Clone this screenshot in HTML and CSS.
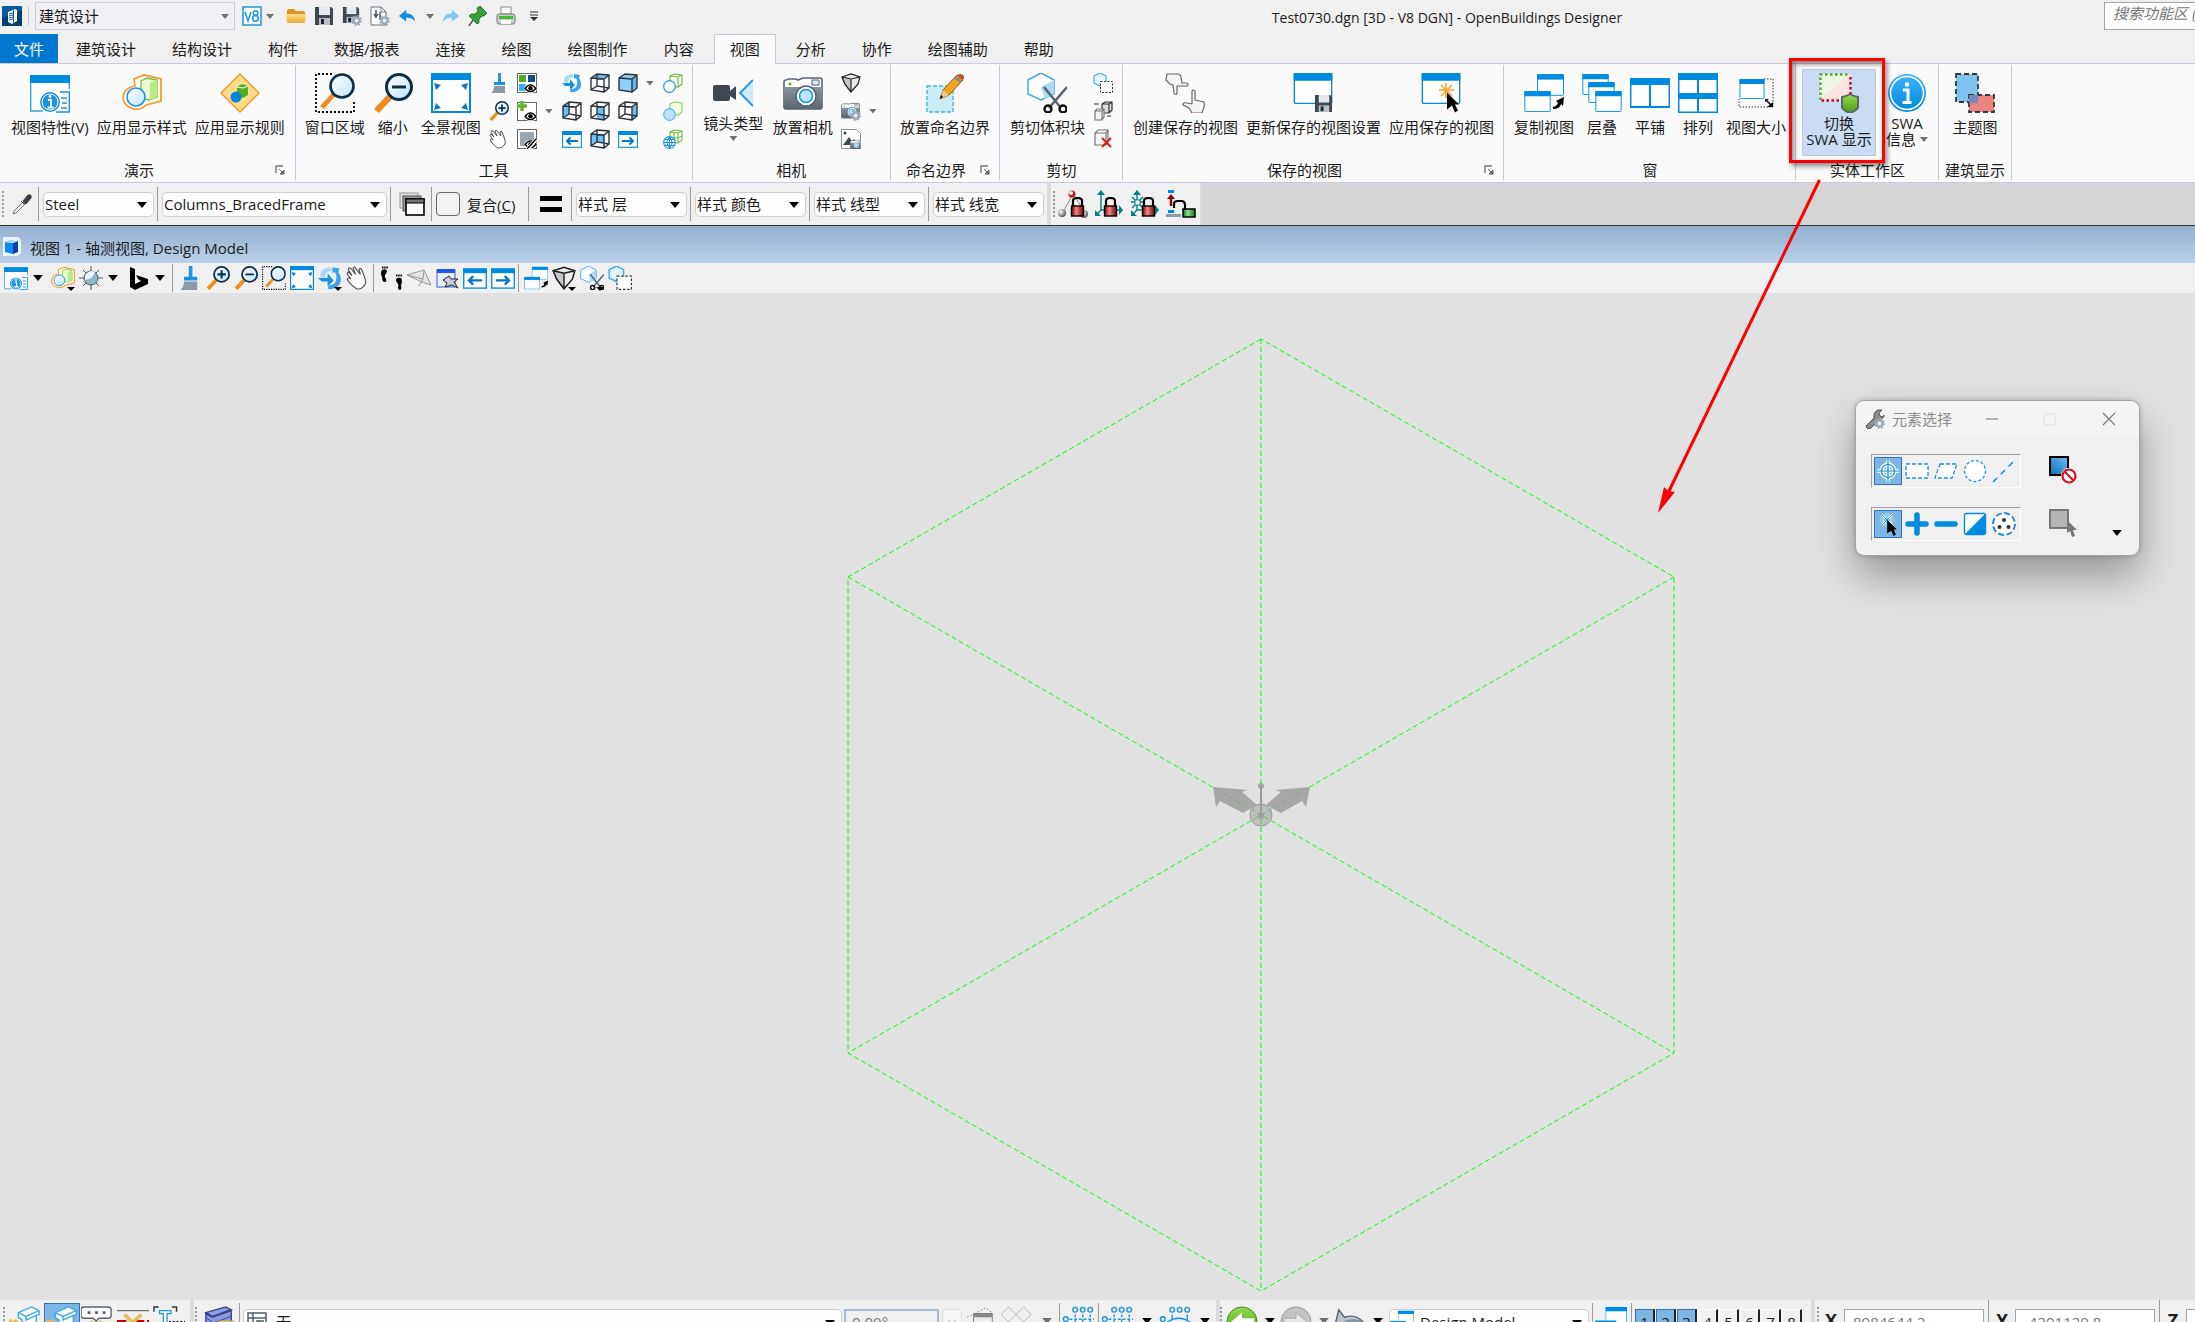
FILE: index.html
```html
<!DOCTYPE html>
<html lang="zh-CN">
<head>
<meta charset="utf-8">
<title>Test0730.dgn [3D - V8 DGN] - OpenBuildings Designer</title>
<link rel="stylesheet" href="styles.css">
</head>
<body>
<svg class="sprite" aria-hidden="true">
  <defs>
    <linearGradient id="gGreen" x1="0" y1="0" x2="0" y2="1"><stop offset="0" stop-color="#8fdc4f"/><stop offset="1" stop-color="#4e9a16"/></linearGradient>
    <linearGradient id="gGray" x1="0" y1="0" x2="0" y2="1"><stop offset="0" stop-color="#8a939c"/><stop offset="1" stop-color="#5c6670"/></linearGradient>
    <linearGradient id="gInfo" x1="0" y1="0" x2="0" y2="1"><stop offset="0" stop-color="#3db4ff"/><stop offset="1" stop-color="#0086dd"/></linearGradient>
    <linearGradient id="gLens" x1="0" y1="0" x2="1" y2="1"><stop offset="0" stop-color="#ffffff"/><stop offset="1" stop-color="#bfe4ff"/></linearGradient>
    <linearGradient id="gFolder" x1="0" y1="0" x2="0" y2="1"><stop offset="0" stop-color="#fde08a"/><stop offset="1" stop-color="#eda93b"/></linearGradient>
    <linearGradient id="gRed" x1="0" y1="0" x2="1" y2="0"><stop offset="0" stop-color="#7a0000"/><stop offset=".4" stop-color="#e88"/><stop offset="1" stop-color="#7a0000"/></linearGradient>
    <linearGradient id="gLockG" x1="0" y1="0" x2="1" y2="0"><stop offset="0" stop-color="#0a7a1c"/><stop offset=".4" stop-color="#8fe08f"/><stop offset="1" stop-color="#0a7a1c"/></linearGradient>
    <linearGradient id="gSq" x1="0" y1="1" x2="1" y2="0"><stop offset="0" stop-color="#0a6db5"/><stop offset="1" stop-color="#6ec0f5"/></linearGradient>
    <radialGradient id="gBall" cx=".35" cy=".35" r=".7"><stop offset="0" stop-color="#fff"/><stop offset="1" stop-color="#555"/></radialGradient>
  </defs>

  <symbol id="logo" viewBox="0 0 20 20"><rect width="20" height="20" rx="1" fill="#0b5a9c"/><path d="M0 12L20 4V20H0z" fill="#08416f"/><path d="M6 6l7-3 2 1v11l-5 3-4-2z" fill="#fff"/><path d="M7 8l4-1M7 10l4-1M7 12l4-1M7 14l4-1M11.500 4v13" stroke="#0b5a9c" fill="none"/></symbol>
  <symbol id="v8" viewBox="0 0 20 20"><rect x="1" y="1" width="18" height="18" fill="#fff" stroke="#1e93e0" stroke-width="1.500"/><path d="M3 6l3 9 3-9" fill="none" stroke="#1e93e0" stroke-width="1.500"/><circle cx="13.500" cy="7" r="2.300" fill="none" stroke="#1e93e0" stroke-width="1.500"/><circle cx="13.500" cy="12.300" r="2.900" fill="none" stroke="#1e93e0" stroke-width="1.500"/></symbol>
  <symbol id="folder" viewBox="0 0 20 20"><path d="M1 5q0-2 2-2h5l2 2h7q2 0 2 2v8q0 2-2 2H3q-2 0-2-2z" fill="#d9952c"/><path d="M0 8h20l-1 8q0 1-2 1H3q-2 0-2-1z" fill="url(#gFolder)"/></symbol>
  <symbol id="save" viewBox="0 0 20 20"><path d="M1 1h16l2 2v16H1z" fill="#3f4750"/><rect x="5" y="1" width="11" height="8" fill="#e4e9ee"/><rect x="5" y="12" width="11" height="7" fill="#b9bfc6"/><rect x="7" y="13" width="3" height="5" fill="#20262d"/></symbol>
  <symbol id="gear" viewBox="0 0 20 20"><circle cx="10" cy="10" r="7" fill="#e8edf2"/><circle cx="10" cy="10" r="5.500" fill="none" stroke="#9aa7b5" stroke-width="4"/><circle cx="10" cy="10" r="8.500" fill="none" stroke="#9aa7b5" stroke-width="3" stroke-dasharray="3.300 3.300"/></symbol>
  <symbol id="savegear" viewBox="0 0 20 20"><use href="#save" width="18" height="18"/><use href="#gear" x="9" y="9" width="11" height="11"/></symbol>
  <symbol id="docgear" viewBox="0 0 20 20"><path d="M1 1h10l5 5v13H1z" fill="#fff" stroke="#69727c"/><path d="M11 1v5h5" fill="none" stroke="#69727c"/><path d="M6 4v8M4 8l2 3 2-3M10 6v8" stroke="#4b5763" stroke-width="1.500" fill="none"/><use href="#gear" x="9" y="9" width="11" height="11"/></symbol>
  <symbol id="undo" viewBox="0 0 20 20"><path d="M1 10l8-7v4c6 0 9 3 10 9-3-3-5-4-10-4v4z" fill="#1a8fe3"/></symbol>
  <symbol id="redo" viewBox="0 0 20 20"><path d="M19 10l-8-7v4c-6 0-9 3-10 9 3-3 5-4 10-4v4z" fill="#86c5f0"/></symbol>
  <symbol id="pin" viewBox="0 0 20 20"><path d="M9 2l3-2 7 7-3 3-2 0-3 3 0 4-2 1-8-8 2-2 4 0 3-3z" fill="#35a03a" stroke="#1e7024" stroke-width=".8"/><path d="M5 14l-4 6" stroke="#555" stroke-width="1.500"/></symbol>
  <symbol id="print" viewBox="0 0 20 20"><path d="M5 8V1h10v7z" fill="#fff" stroke="#888"/><rect x="1" y="8" width="18" height="10" rx="2" fill="#c9cdd2" stroke="#777"/><rect x="3" y="10" width="14" height="3" fill="#3fbf2f"/><rect x="5" y="14" width="10" height="4" fill="#fff"/></symbol>
  <symbol id="qmenu" viewBox="0 0 12 12"><path d="M2 2h8M2 5h8" stroke="#333"/><path d="M2 7h8l-4 4z" fill="#333"/></symbol>

  <symbol id="win" viewBox="0 0 40 32"><rect x=".7" y=".7" width="38.600" height="30.600" rx="1" fill="#fff" stroke="#008be1" stroke-width="1.400"/><rect width="40" height="8" fill="#008be1"/></symbol>
  <symbol id="winprop" viewBox="0 0 40 40"><path d="M.7 3h38.600v35H.7z" fill="#fff" stroke="#3aa0e0" stroke-width="1.400"/><rect y="2" width="40" height="8" fill="#008be1"/><path d="M22 16h18v24H12z" fill="#fff"/><path d="M30 19h9.300v20H26M31 25h6M32 30h5M31 35h6" fill="none" stroke="#1e93e0" stroke-width="1.500"/><circle cx="20" cy="29" r="10" fill="#1e93e0"/><circle cx="20" cy="29" r="8" fill="none" stroke="#fff"/><path d="M18 27h3v7M17.500 34.500h6" stroke="#fff" stroke-width="2" fill="none"/><circle cx="20" cy="23.500" r="1.400" fill="#fff"/></symbol>
  <symbol id="dstyle" viewBox="0 0 40 40"><path d="M12 6l10-4 17 4v22l-15 4q-5 5-12 4Q1 33 1 24q1-9 12-11z" fill="#fffaf0" stroke="#f59a23" stroke-width="1.700"/><path d="M19 8l6-3 10 2v17l-8 3-8-2z" fill="#e9fbd5" stroke="#6fbf3b" stroke-width="1.300"/><path d="M28 10l7-3v17l-7 3z" fill="#b8eb84"/><circle cx="14" cy="24" r="9" fill="url(#gLens)" stroke="#1e93e0" stroke-width="1.600"/></symbol>
  <symbol id="drule" viewBox="0 0 40 40"><path d="M20 1l19 19-19 19L1 20z" fill="#ffdc8c" stroke="#f59a23" stroke-width="1.500"/><path d="M17 14l5-3 6 2v9l-5 3-6-2z" fill="#4fae22"/><path d="M17 14l6 1 5-2" stroke="#fff" fill="none"/><circle cx="16" cy="24" r="5.500" fill="#0086dd"/></symbol>
  <symbol id="mag" viewBox="0 0 40 40"><path d="M1 36l5 4 13-14-5-4z" fill="#f08c1e"/><circle cx="26" cy="14" r="12.500" fill="url(#gLens)" stroke="#0b2f48" stroke-width="3"/></symbol>
  <symbol id="zoomarea" viewBox="0 0 40 40"><path d="M17 1H1v38h38V28" fill="none" stroke="#000" stroke-width="1.800" stroke-dasharray="2 2"/><path d="M5 33l4 3 12-14-3-3z" fill="#f08c1e"/><circle cx="27" cy="13" r="11.500" fill="url(#gLens)" stroke="#0b2f48" stroke-width="2.600"/></symbol>
  <symbol id="zoomout" viewBox="0 0 40 40"><use href="#mag"/><path d="M19 14h14" stroke="#0b2f48" stroke-width="3"/></symbol>
  <symbol id="zoomin" viewBox="0 0 40 40"><use href="#mag"/><path d="M19 14h14M26 7v14" stroke="#0b2f48" stroke-width="3.500"/></symbol>
  <symbol id="fit" viewBox="0 0 40 40"><rect x="1" y="1" width="38" height="38" fill="#fff" stroke="#008be1" stroke-width="2"/><rect width="40" height="7" fill="#008be1"/><path d="M3 10l7 2-5 5zM37 10l-7 2 5 5zM3 37l7-2-5-5zM37 37l-7-2 5-5z" fill="#1274c4"/></symbol>
  <symbol id="brush" viewBox="0 0 20 20"><path d="M9 0h3v9h4v3H5V9h4z" fill="#1e93e0"/><path d="M5 13h11v7H2q3-2 3-7z" fill="#8c98a3"/></symbol>
  <symbol id="hand" viewBox="0 0 20 20"><path d="M2 8q-2-2 0-3l3 3-3-5q0-2 2-1l4 5-2-5q1-2 2 0l4 5-1-4q1-2 2 0l2 5q2 5 1 7-3 5-7 4-2-1-6-5l-2-3q1-2 3 0z" fill="#fff" stroke="#555" stroke-width="1"/></symbol>
  <symbol id="eye" viewBox="0 0 14 10"><ellipse cx="7" cy="5" rx="7" ry="5" fill="#fff"/><path d="M1 5q6-8 12 0q-6 7-12 0z" fill="#fff" stroke="#000" stroke-width="1.600"/><circle cx="7" cy="4.600" r="2.500"/></symbol>
  <symbol id="lvl" viewBox="0 0 20 20"><rect x=".5" y=".5" width="19" height="19" fill="#fff" stroke="#666"/><rect x="2" y="2" width="7" height="7" fill="#52ab24"/><rect x="11" y="2" width="7" height="7" fill="#0b4f80"/><rect x="2" y="11" width="7" height="7" fill="#35b0f5"/><use href="#eye" x="7" y="11" width="13" height="9"/></symbol>
  <symbol id="lvladd" viewBox="0 0 20 20"><rect x=".5" y="1.500" width="19" height="18" fill="#fff" stroke="#666"/><path d="M5 0v10M0 5h10" stroke="#61b336" stroke-width="3.500"/><use href="#eye" x="7" y="11" width="13" height="9"/></symbol>
  <symbol id="lvloff" viewBox="0 0 20 20"><rect x=".5" y=".5" width="19" height="19" fill="#fff" stroke="#666"/><rect x="3" y="3" width="14" height="14" fill="#9aa6b0"/><use href="#eye" x="7" y="11" width="13" height="9"/><path d="M9 20L18 10M12 20l8-9" stroke="#fff" stroke-width="1.500"/><path d="M10 20L19 10" stroke="#000" stroke-width="1.300"/></symbol>
  <symbol id="rotate" viewBox="0 0 20 20"><path d="M10 1Q1 2 2 9l4 1Q6 4 12 4z" fill="#a8d8fa"/><path d="M0 10h8V6l5 6-5 5v-4H3z" fill="#1e8fe0"/><path d="M12 1l6 1-1 3q5 8-2 13-4 2-7 1l1-3q5 0 6-4 1-4-1-7l-2 1z" fill="#3ba3ee"/></symbol>
  <symbol id="cube" viewBox="0 0 20 20"><path d="M1 5l6-4 12 1v13l-5 4-13-2zM1 5l13 1 5-4M14 6v13M7 1v12l12 2M7 13l-6 4" fill="none" stroke="#2d3338" stroke-width="1.400"/></symbol>
  <symbol id="ctop" viewBox="0 0 20 20"><path d="M1 5l6-4 12 1-5 4z" fill="#6cc1f7"/><use href="#cube"/></symbol>
  <symbol id="ciso" viewBox="0 0 20 20"><path d="M1 5l6-4 12 1v13l-5 4-13-2z" fill="#8fd0fa"/><path d="M7 7h7v10l5-3V3l-5 3z" fill="#5cb8f5"/><path d="M1 5l6-4 12 1v13l-5 4-13-2zM1 5l13 1 5-4M14 6v13" fill="none" stroke="#2d3338" stroke-width="1.400"/></symbol>
  <symbol id="cleft" viewBox="0 0 20 20"><path d="M1 5l6-4v12l-6 4z" fill="#6cc1f7"/><use href="#cube"/></symbol>
  <symbol id="cfront" viewBox="0 0 20 20"><path d="M7 5.500l7 .5v13l-7-1z" fill="#6cc1f7"/><use href="#cube"/></symbol>
  <symbol id="cright" viewBox="0 0 20 20"><path d="M14 6l5-4v13l-5 4z" fill="#6cc1f7"/><use href="#cube"/></symbol>
  <symbol id="cback" viewBox="0 0 20 20"><path d="M1 5l13 1v8l-7-1-6 4z" fill="#6cc1f7"/><use href="#cube"/></symbol>
  <symbol id="prev" viewBox="0 0 20 20"><rect x=".6" y="2.600" width="18.800" height="15.800" fill="#fff" stroke="#1e93e0" stroke-width="1.200"/><rect y="2" width="20" height="4" fill="#008be1"/><path d="M16 12H5M8.500 8.500L5 12l3.500 3.500" fill="none" stroke="#0b76c4" stroke-width="2"/></symbol>
  <symbol id="next" viewBox="0 0 20 20"><rect x=".6" y="2.600" width="18.800" height="15.800" fill="#fff" stroke="#1e93e0" stroke-width="1.200"/><rect y="2" width="20" height="4" fill="#008be1"/><path d="M4 12h11M11.500 8.500L15 12l-3.500 3.500" fill="none" stroke="#0b76c4" stroke-width="2"/></symbol>
  <symbol id="sw" viewBox="0 0 20 20"><path d="M7 3l4-2 8 1v9l-4 3-8-1zM7 3l8 1 4-2M15 4v10" fill="#fff" stroke="#6fbf3b" stroke-width="1.200"/><circle cx="6.500" cy="13.500" r="5.800" fill="#fff" stroke="#1e93e0" stroke-width="1.200"/></symbol>
  <symbol id="ss" viewBox="0 0 20 20"><path d="M7 3l4-2 8 1v9l-4 3-8-1z" fill="#f4fde8" stroke="#8ed35f" stroke-width="1.200"/><circle cx="6.500" cy="13.500" r="5.800" fill="#b9e2ff" stroke="#64b5ec" stroke-width="1.200"/></symbol>
  <symbol id="sg" viewBox="0 0 20 20"><path d="M7 3l4-2 8 1v9l-4 3-8-1zM7 3l8 1 4-2M15 4v10M11 3v10M7 8l8 1 4-2" fill="#fff" stroke="#6fbf3b" stroke-width="1.100"/><circle cx="6.500" cy="13.500" r="5.800" fill="#fff" stroke="#1e93e0" stroke-width="1.200"/><path d="M1 13.500h11M6.500 8v11M2 10.500h9M2 16.500h9M6.500 8q-5 5 0 11q5-5 0-11" fill="none" stroke="#1e93e0"/></symbol>

  <symbol id="cam" viewBox="0 0 40 40"><rect y="12" width="17" height="16" rx="2" fill="#3f4750"/><path d="M17 18l6-5v14l-6-4z" fill="#3f4750"/><path d="M40 7L27 20l13 13z" fill="#cdeaff"/><path d="M40 7L27 20l13 13" fill="none" stroke="#1e93e0" stroke-width="1.800"/></symbol>
  <symbol id="photo" viewBox="0 0 40 40"><path d="M1 9q0-2 2-2l3-1h7l2 1 5-2h17q2 0 2 2v27q0 2-2 2H3q-2 0-2-2z" fill="#fff" stroke="#59636d" stroke-width="1.600"/><path d="M1 14h38v20q0 2-2 2H3q-2 0-2-2z" fill="url(#gGray)"/><circle cx="7" cy="11" r="1.600" fill="#52b824"/><rect x="29" y="7" width="7" height="5" fill="#d6ecfb" stroke="#59636d"/><circle cx="23" cy="23" r="10" fill="#fff" stroke="#59636d" stroke-width="1.500"/><circle cx="23" cy="23" r="6.500" fill="#bfe4ff" stroke="#1e93e0" stroke-width="1.500"/></symbol>
  <symbol id="persp" viewBox="0 0 20 20"><path d="M1 4l9-3 9 3-2 7-7 8-6-8z" fill="#ececec" stroke="#222" stroke-width="1.300"/><path d="M10 6v13l-6-8-3-7z" fill="#c4c8cc"/><path d="M1 4l9 2 9-2M10 6v13M1 4l3 7 6 8" fill="none" stroke="#222" stroke-width="1.200"/></symbol>
  <symbol id="camgear" viewBox="0 0 20 20"><use href="#photo" width="19" height="19"/><use href="#gear" x="9" y="9" width="11" height="11"/></symbol>
  <symbol id="imgcam" viewBox="0 0 20 20"><path d="M.5.500h15l4 4v15H.5z" fill="#fff" stroke="#8a929a"/><path d="M2 16l6-8 3 4 2-2 4 6z" fill="#3f4750"/><circle cx="4" cy="4" r="1.500" fill="#3f4750"/><use href="#photo" x="9" y="10" width="11" height="11"/></symbol>
  <symbol id="pencil" viewBox="0 0 40 40"><path d="M2 13h26v26H2z" fill="#cbedf8" stroke="#45b5dd" stroke-width="1.400" stroke-dasharray="4 2"/><path d="M15 26l3-9L32 2l6 5-14 15z" fill="#f3a51e" stroke="#8a5a13"/><path d="M32 2q4-2 6 0t0 5z" fill="#c74a3c"/><path d="M30 4l6 5" stroke="#888" stroke-width="3"/><path d="M15 26l3-9 6 5z" fill="#e8c79b"/><path d="M15 26l1-4 2 2z"/></symbol>
  <symbol id="clip" viewBox="0 0 40 40"><path d="M1 7l13-7 13 7v14l-13 6L1 21z" fill="#fff" stroke="#3fa9ea" stroke-width="1.500"/><path d="M14 14l13-7v14l-9 5z" fill="#a9dafa"/><path d="M17 14l17 21M40 14L22 35" stroke="#59636d" stroke-width="2.500"/><circle cx="21" cy="36" r="3.500" fill="none" stroke="#111" stroke-width="2.400"/><circle cx="36" cy="36" r="3.500" fill="none" stroke="#111" stroke-width="2.400"/></symbol>
  <symbol id="clipbox" viewBox="0 0 20 20"><path d="M1 3l6-3 6 3v7l-6 3-6-3z" fill="#e3f4ff" stroke="#3fa9ea" stroke-width="1.200"/><rect x="7.500" y="8.500" width="12" height="11" fill="#fff" stroke="#333" stroke-dasharray="2 1.500"/></symbol>
  <symbol id="clipswap" viewBox="0 0 20 20"><path d="M9 3l3-2h7v8l-3 3H9zM9 3h7v9M16 3l3-2" fill="#ddd" stroke="#333" stroke-width="1.200"/><path d="M2 10l2-2h7v8l-2 3H2zM2 10h7v9M9 10l2-2" fill="#f4f4f4" stroke="#777" stroke-width="1.200"/><path d="M1 3h5M14 15h4" stroke="#333"/></symbol>
  <symbol id="clipdel" viewBox="0 0 20 20"><path d="M2 4l3-3h10v12l-2 3H2zM2 4h11v12M13 4l2-3" fill="#f7f7f7" stroke="#777" stroke-width="1.200"/><path d="M9 9l9 9M18 9l-9 9" stroke="#cf1f1f" stroke-width="2"/></symbol>
  <symbol id="hands" viewBox="0 0 40 40"><g fill="#f6f6f6" stroke="#666" stroke-width="1.200" stroke-linejoin="round"><path d="M2 1h11q2 0 3 3l1 6h5q2 1 0 3H12v7q-1 3-3 0l-1-8-3-1-4-4z"/><path d="M27 18q1-2 3 0v9l9 2q1 5-1 8l-1 3H27l-3-5-6-3q0-3 4-2l5 1z"/></g></symbol>
  <symbol id="winsave" viewBox="0 0 40 40"><use href="#win" width="40" height="31"/><use href="#save" x="21" y="21" width="19" height="19"/></symbol>
  <symbol id="cur" viewBox="0 0 14 20"><path d="M1 0l12 12H9l3 6-3 2-3-7-5 4z"/></symbol>
  <symbol id="winapply" viewBox="0 0 40 40"><use href="#win" width="40" height="31"/><path d="M25 10v15M18 17h15M20 12l11 11M31 12L20 23" stroke="#f9a32a" stroke-width="1.500"/><use href="#cur" x="25" y="19" width="14" height="21"/></symbol>
  <symbol id="copyview" viewBox="0 0 40 40"><use href="#win" x="13" y="1" width="27" height="22"/><use href="#win" y="18" width="27" height="21"/><path d="M29 36q7 0 8-5l2 2 1-9-8 4 2 2q-1 3-5 4z"/></symbol>
  <symbol id="cascade" viewBox="0 0 40 40"><use href="#win" y="1" width="27" height="21"/><use href="#win" x="6" y="9" width="27" height="21"/><use href="#win" x="13" y="18" width="27" height="21"/></symbol>
  <symbol id="tile" viewBox="0 0 40 40"><rect y="5" width="40" height="30" fill="#008be1"/><path d="M1.500 12H19v21H1.500zM21 12h17.500v21H21z" fill="#fff"/></symbol>
  <symbol id="arrange" viewBox="0 0 40 40"><rect width="40" height="40" fill="#008be1"/><path d="M1.500 7H19v13H1.500zM21 7h17.500v13H21zM1.500 26H19v12.500H1.500zM21 26h17.500v12.500H21z" fill="#fff"/></symbol>
  <symbol id="wsize" viewBox="0 0 40 40"><path d="M28 6h9v28H3v-8" fill="none" stroke="#333" stroke-dasharray="1.500 1.500"/><use href="#win" x="3" y="6" width="26" height="20"/><path d="M30 27l5 5" stroke="#000" stroke-width="1.500"/><path d="M29 26h4l-4 3zM37 34h-6l6-5z"/></symbol>
  <symbol id="swa" viewBox="0 0 40 40"><path d="M1 1h30L1 27z" fill="#ecf6e3"/><path d="M31 1v26H1z" fill="#fbe3e1"/><path d="M1.500 27V1.500H31" fill="none" stroke="#57a82a" stroke-width="2.500" stroke-dasharray="2.500 2.500"/><path d="M31.500 4v23.500H2" fill="none" stroke="#d8001b" stroke-width="2.500" stroke-dasharray="2.500 2.500"/><path d="M23 24q5-1 8-3 3 2 8 3v10q0 3-8 6-8-3-8-6z" fill="url(#gGreen)" stroke="#59676b" stroke-width="2"/></symbol>
  <symbol id="info" viewBox="0 0 40 40"><circle cx="20" cy="20" r="19" fill="url(#gInfo)"/><circle cx="20" cy="20" r="16.500" fill="none" stroke="#fff" stroke-width="1.600"/><path d="M16 17h5v12M15.500 29.500h9" stroke="#fff" stroke-width="3" fill="none"/><circle cx="20" cy="11.500" r="2.200" fill="#fff"/></symbol>
  <symbol id="theme" viewBox="0 0 40 40"><path d="M1 1h22v28H1z" fill="#7fc3ee" stroke="#333a44" stroke-width="1.800" stroke-dasharray="5 3"/><path d="M14 22h25v17H14z" fill="#e98481" stroke="#333a44" stroke-width="1.800" stroke-dasharray="5 3"/><path d="M14 22h9v8h-9z" fill="#7788b8"/></symbol>
  <symbol id="launch" viewBox="0 0 10 10"><path d="M1 8V1h7" fill="none" stroke="#777" stroke-width="1.400"/><path d="M4 4l4 4M9 5v4H5z" fill="#666" stroke="#666"/></symbol>

  <symbol id="dropper" viewBox="0 0 20 20"><path d="M1 20l1-3 9-9 2 2-9 9z" fill="#e8eaec" stroke="#777"/><path d="M9 7l4 4M11 7l5-6q4-1 3 3l-5 6z" fill="#3a3f4a" stroke="#3a3f4a"/></symbol>
  <symbol id="layers" viewBox="0 0 26 24"><rect x="1" y="1" width="18" height="15" fill="#ddd" stroke="#999"/><rect x="4" y="4" width="18" height="15" fill="#999" stroke="#555"/><rect x="7" y="7" width="18" height="16" fill="#fff" stroke="#000" stroke-width="1.600"/><rect x="7" y="7" width="18" height="4" fill="#777" stroke="#000"/></symbol>
  <symbol id="eq" viewBox="0 0 24 24"><path d="M1 4h22v5H1zM1 15h22v5H1z"/></symbol>
  <symbol id="lock" viewBox="0 0 14 20"><path d="M2.500 9V4q0-3 4.500-3t4.500 3v5" fill="none" stroke="#000" stroke-width="2.200"/><rect x="1" y="9" width="12" height="10" fill="url(#gRed)" stroke="#000" stroke-width="1.400"/></symbol>
  <symbol id="lk1" viewBox="0 0 30 28"><path d="M5 22L15 4l12 18" stroke="#888" fill="none"/><circle cx="14" cy="4" r="3.500" fill="#b22"/><circle cx="13" cy="3" r="2" fill="#eee"/><circle cx="4" cy="23" r="4" fill="url(#gBall)"/><circle cx="26" cy="24" r="4" fill="url(#gBall)"/><use href="#lock" x="12" y="7" width="15" height="20"/></symbol>
  <symbol id="lk2" viewBox="0 0 30 28"><path d="M7 21V3M7 20L3 24M7 20h18" stroke="#008080" stroke-width="1.400" fill="none"/><path d="M3 5l4-5 4 5zM1 26v-6l6 6zM25 15l4 5-4 5z" fill="#008080"/><use href="#lock" x="9" y="7" width="15" height="20"/></symbol>
  <symbol id="lk3" viewBox="0 0 30 28"><path d="M7 20V3M7 20L3 24M7 20h18M1 12h12M2 7l11 11M13 7L2 18" stroke="#008080" stroke-width="1.400" fill="none"/><path d="M3 5l4-5 4 5zM1 26v-6l6 6zM25 15l4 5-4 5z" fill="#008080"/><rect x="5" y="10" width="5" height="5" fill="#fff" stroke="#008080"/><use href="#lock" x="11" y="7" width="15" height="20"/></symbol>
  <symbol id="lk4" viewBox="0 0 30 28"><path d="M2 0h6v3H2zM2 20h6v3H2z" fill="#0086dd"/><path d="M0 24h15v3H0z" fill="#8aa0ae"/><path d="M5 16V7" stroke="#8c0000" stroke-width="2.500"/><path d="M1 9l4-5 4 5z" fill="#8c0000"/><path d="M8 18v-4q0-3 4-3h3q4 0 4 4v5" fill="none" stroke="#000" stroke-width="2.200"/><rect x="17" y="19" width="12" height="8" fill="url(#gLockG)" stroke="#000" stroke-width="1.500"/></symbol>

  <symbol id="viewcube" viewBox="0 0 20 20"><path d="M1 0h15l3 3v13l-3 3H1z" fill="#eaf4ff"/><path d="M3 5l8 1v11l-8-2z" fill="#0a8af0"/><path d="M11 6l5-2v11l-5 2z" fill="#0a3fae"/><path d="M3 5l5-2 8 1-5 2z" fill="#9fd4ff"/></symbol>
  <symbol id="sun" viewBox="0 0 24 24"><path d="M12 0v24M0 12h24M4 4l16 16M20 4L4 20" stroke="#555"/><circle cx="12" cy="12" r="7" fill="#8fb7c9" stroke="#47606e"/><path d="M6 10a7 7 0 0 1 10-4q-2 7-10 8z" fill="#e6f7ff"/></symbol>
  <symbol id="bing" viewBox="0 0 24 24"><path d="M4 1l5 2v15l6-3-3-2-2-4 12 4v5L9 24l-5-3z"/></symbol>
  <symbol id="feet" viewBox="0 0 24 24"><path d="M3 4q4-2 5 1 0 2-2 4-1 2 1 4 1 3-1 3-3 0-3-5-2-4 0-7zM22 12q-5-1-5 2 0 2 2 4 1 2 0 3 0 3 2 3 2-1 1-5 2-4 0-7z"/><path d="M3 1.500h6M17 9.500h6" stroke="#000" stroke-width="2" stroke-dasharray="1.500 .700"/></symbol>
  <symbol id="plane" viewBox="0 0 24 24"><path d="M0 9L17 4l7 15-9-3z" fill="#e6e6e6" stroke="#999"/><path d="M0 9l16 4 1-9M16 13l-4 7" stroke="#999" fill="none"/></symbol>
  <symbol id="nav" viewBox="0 0 24 24"><rect x="2" y="4" width="18" height="17" fill="#e8eefc" stroke="#2f5fd0"/><rect x="2" y="3" width="18" height="4" fill="#2156e8"/><path d="M8 14l6-4 2 3h7l-4 3 4 6-6-3-7 2 2-4z" fill="#c5ced8" stroke="#222"/></symbol>
  <symbol id="dd" viewBox="0 0 8 5"><path d="M0 0h8L4 5z"/></symbol>

  <symbol id="wrench" viewBox="0 0 20 20"><path d="M1 17L9 9q-1-6 4-8l4 0-3 3 1 3 3 1 1-2q0 4-5 5L5 20q-3 1-4-3z" fill="#8d8d8d" stroke="#555"/><use href="#gear" x="9" y="9" width="11" height="11"/></symbol>
  <symbol id="s1" viewBox="0 0 24 24"><circle cx="12" cy="12" r="6.500" fill="none" stroke="#fff" stroke-width="4"/><path d="M12 1v22M1 12h22" stroke="#fff" stroke-width="3.500"/><circle cx="12" cy="12" r="6.500" fill="none" stroke="#1587d6" stroke-width="1.200"/><path d="M12 1v22M1 12h22" stroke="#1587d6" stroke-width="1.200"/></symbol>
  <symbol id="s2" viewBox="0 0 24 24"><rect x="1" y="5" width="22" height="14" fill="#fff" stroke="#1e93e0" stroke-width="1.300" stroke-dasharray="4 2"/></symbol>
  <symbol id="s3" viewBox="0 0 24 24"><path d="M6 5h17l-5 14H1z" fill="#fff" stroke="#1e93e0" stroke-width="1.300" stroke-dasharray="4 2"/></symbol>
  <symbol id="s4" viewBox="0 0 24 24"><circle cx="12" cy="12" r="10.500" fill="#fff" stroke="#1e93e0" stroke-width="1.300" stroke-dasharray="3 2"/></symbol>
  <symbol id="s5" viewBox="0 0 24 24"><path d="M1 23L23 1" stroke="#1e93e0" stroke-width="1.600" stroke-dasharray="6 5"/></symbol>
  <symbol id="s6" viewBox="0 0 28 28"><rect x="1" y="1" width="18" height="18" fill="url(#gSq)" stroke="#000" stroke-width="2"/><circle cx="20" cy="20" r="8" fill="#fff"/><circle cx="20" cy="20" r="6.500" fill="#fff" stroke="#d8101c" stroke-width="2.200"/><path d="M16 16l8 8" stroke="#d8101c" stroke-width="2.200"/></symbol>
  <symbol id="m1" viewBox="0 0 24 24"><path d="M11 1v14M4 8h14M6 3l10 10M16 3L6 13" stroke="#fff" stroke-width="2.500"/><path d="M11 1v14M4 8h14M6 3l10 10M16 3L6 13" stroke="#1e93e0"/><use href="#cur" x="10" y="8" width="12" height="16"/></symbol>
  <symbol id="m2" viewBox="0 0 24 24"><path d="M12 3v18M3 12h18" stroke="#008be1" stroke-width="5.500" stroke-linecap="round"/></symbol>
  <symbol id="m3" viewBox="0 0 24 24"><path d="M3 12h18" stroke="#008be1" stroke-width="5.500" stroke-linecap="round"/></symbol>
  <symbol id="m4" viewBox="0 0 24 24"><rect x="1.500" y="1.500" width="21" height="21" rx="2" fill="#fff" stroke="#008be1" stroke-width="1.400"/><path d="M22 2v20H2z" fill="#008be1"/></symbol>
  <symbol id="m5" viewBox="0 0 24 24"><circle cx="12" cy="12" r="11" fill="#fff" stroke="#1587d6" stroke-width="1.800" stroke-dasharray="6 2.600"/><circle cx="12" cy="8" r="2" fill="#333"/><circle cx="7.500" cy="15" r="2" fill="#333"/><circle cx="16.500" cy="15" r="2" fill="#333"/></symbol>
  <symbol id="m6" viewBox="0 0 28 28"><rect x="1" y="1" width="18" height="18" fill="#b5b5b5" stroke="#777" stroke-width="2"/><path d="M18 11l10 10h-4l2 6-3 1-2-6-3 2z" fill="#777"/></symbol>

  <symbol id="beam" viewBox="0 0 34 34"><path d="M10 7L24 1l8 4v4l-3 1v8l3 3v3l-14 8-8-3v-4l4-2v-8l-4-3z" fill="#fff" stroke="#3fa9ea" stroke-width="1.500"/><path d="M10 7l8 4 14-6M18 11v4l11-5" fill="none" stroke="#3fa9ea" stroke-width="1.500"/><path d="M0 15l8 8M8 15l-6 8" stroke="#e5b94d" stroke-width="4"/></symbol>
  <symbol id="talk" viewBox="0 0 34 34"><path d="M4 1h24q4 0 4 3v6q0 3-4 3h-9l-3 3-3-3H4q-4 0-4-3V4q0-3 4-3z" fill="#fff" stroke="#59636d" stroke-width="1.500"/><path d="M7 7h3M15 7h3M23 7h3" stroke="#59636d" stroke-width="3"/><path d="M10 16l10 10M22 16L10 26" stroke="#e5b94d" stroke-width="3"/></symbol>
  <symbol id="cutx" viewBox="0 0 34 34"><path d="M0 5h34" stroke="#444"/><path d="M0 17h34" stroke="#c00000" stroke-width="4" stroke-dasharray="10 3 3 3"/><path d="M8 9l16 16M26 9L8 25" stroke="#e5c060" stroke-width="4"/></symbol>
  <symbol id="ibeam" viewBox="0 0 34 34"><path d="M1 6V1h5M20 1h5v5" fill="none" stroke="#333" stroke-width="1.500"/><path d="M7 5h12v3h-4v15H11V8H7z" fill="#fff" stroke="#1e93e0" stroke-width="1.300"/><path d="M17 17h17" stroke="#000" stroke-width="2" stroke-dasharray="2 2"/></symbol>
  <symbol id="stack" viewBox="0 0 34 34"><path d="M3 7L24 1l6 3-20 7z" fill="#8aa0ee" stroke="#39427e" stroke-width="1.500"/><path d="M3 8v12l7 6 20-8V5l-20 7z" fill="#8a9ce8" stroke="#39427e" stroke-width="1.500"/><path d="M4 13l7 5 19-7" fill="none" stroke="#39427e"/><path d="M16 16h17v10H16z" fill="#fdf3a6" stroke="#c9a93a"/></symbol>
  <symbol id="tbl" viewBox="0 0 20 20"><rect x="1" y="1" width="18" height="18" fill="#fff" stroke="#4b6068" stroke-width="1.500"/><path d="M1 6h18M6 1v18M9 9h8M12 9v10" stroke="#4b6068" stroke-width="1.500"/></symbol>
  <symbol id="acs" viewBox="0 0 34 34"><path d="M2 12L22 2l8 6" fill="none" stroke="#888" stroke-dasharray="2 2"/><path d="M9 8h20v20H9z" fill="#eee" stroke="#777"/><path d="M9 8h20v4H9z" fill="#888"/></symbol>
  <symbol id="diam" viewBox="0 0 34 34"><path d="M0 9l8-8 8 8-8 8zM16 9l8-8 8 8-8 8zM0 24l8-8 8 8M16 24l8-8 8 8" fill="none" stroke="#999" stroke-dasharray="2 1"/></symbol>
  <symbol id="grid" viewBox="0 0 34 34"><g fill="none" stroke="#1e93e0" stroke-width="1.500"><circle cx="14" cy="4" r="2.500"/><circle cx="22" cy="4" r="2.500"/><circle cx="30" cy="4" r="2.500"/><circle cx="4" cy="14" r="2.500"/><path d="M14 9v20M22 9v20M30 9v20M8 14h26M8 22h26" stroke-dasharray="3 2"/></g></symbol>
  <symbol id="arcgrid" viewBox="0 0 34 34"><g fill="none" stroke="#1e93e0" stroke-width="1.500"><circle cx="14" cy="4" r="2.500"/><circle cx="22" cy="4" r="2.500"/><circle cx="30" cy="4" r="2.500"/><circle cx="4" cy="14" r="2.500"/><path d="M9 17q12-8 24 0M14 9v6M30 9v6"/></g></symbol>
  <symbol id="back" viewBox="0 0 34 34"><circle cx="17" cy="17" r="16" fill="url(#gGreen)" stroke="#3f8414"/><path d="M4 18L17 7v6h13v9H17v6z" fill="#fff"/></symbol>
  <symbol id="fwd" viewBox="0 0 34 34"><circle cx="17" cy="17" r="16" fill="#c4c4c4" stroke="#999"/><path d="M30 18L17 7v6H4v9h13v6z" fill="#e6e6e6" stroke="#aaa"/></symbol>
  <symbol id="ship" viewBox="0 0 34 34"><path d="M5 4l6 8q12-4 20 5l3 4H1z" fill="#b9c4cf" stroke="#59636d" stroke-width="1.500"/><ellipse cx="20" cy="17" rx="9" ry="3" fill="#8494a3"/></symbol>
</svg>

<div class="app">
  <header class="titlebar">
    <svg class="i20"><use href="#logo"/></svg>
    <span class="tsep"></span>
    <label class="workflow"><select aria-label="工作流"><option>建筑设计</option></select></label>
    <button class="tb v8" aria-label="V8"><svg class="i20"><use href="#v8"/></svg><svg class="dd g"><use href="#dd"/></svg></button>
    <button class="tb" aria-label="打开"><svg class="i20"><use href="#folder"/></svg></button>
    <button class="tb" aria-label="保存"><svg class="i20"><use href="#save"/></svg></button>
    <button class="tb" aria-label="保存设置"><svg class="i20"><use href="#savegear"/></svg></button>
    <button class="tb" aria-label="压缩"><svg class="i20"><use href="#docgear"/></svg></button>
    <button class="tb undo" aria-label="撤销"><svg class="i18"><use href="#undo"/></svg><svg class="dd g"><use href="#dd"/></svg></button>
    <button class="tb" aria-label="重做"><svg class="i18"><use href="#redo"/></svg></button>
    <button class="tb" aria-label="固定"><svg class="i20"><use href="#pin"/></svg></button>
    <button class="tb" aria-label="打印"><svg class="i20"><use href="#print"/></svg></button>
    <button class="tb more" aria-label="自定义"><svg class="i12"><use href="#qmenu"/></svg></button>
    <h1>Test0730.dgn [3D - V8 DGN] - OpenBuildings Designer</h1>
    <input class="search" type="text" placeholder="搜索功能区 (F4)" aria-label="搜索功能区">
  </header>

  <nav class="tabs">
    <button class="file">文件</button><button>建筑设计</button><button>结构设计</button><button>构件</button><button>数据/报表</button><button>连接</button><button>绘图</button><button>绘图制作</button><button>内容</button><button class="on">视图</button><button>分析</button><button>协作</button><button>绘图辅助</button><button>帮助</button>
  </nav>

  <section class="ribbon">
    <div class="group first">
      <div class="tools">
        <button class="big"><svg><use href="#winprop"/></svg><span>视图特性(V)</span></button>
        <button class="big"><svg><use href="#dstyle"/></svg><span>应用显示样式</span></button>
        <button class="big"><svg><use href="#drule"/></svg><span>应用显示规则</span></button>
      </div>
      <div class="cap"><span>演示</span><button class="launch" aria-label="演示设置"><svg><use href="#launch"/></svg></button></div>
    </div>
    <div class="group">
      <div class="tools">
        <button class="big"><svg><use href="#zoomarea"/></svg><span>窗口区域</span></button>
        <button class="big"><svg><use href="#zoomout"/></svg><span>缩小</span></button>
        <button class="big"><svg><use href="#fit"/></svg><span>全景视图</span></button>
        <div class="mini wide">
          <svg><use href="#brush"/></svg><svg><use href="#lvl"/></svg><i></i><svg><use href="#rotate"/></svg><svg><use href="#ctop"/></svg><svg><use href="#ciso"/></svg><i class="arr"></i><svg><use href="#sw"/></svg>
          <svg><use href="#zoomin"/></svg><svg><use href="#lvladd"/></svg><i class="arr"></i><svg><use href="#cleft"/></svg><svg><use href="#cfront"/></svg><svg><use href="#cright"/></svg><i></i><svg><use href="#ss"/></svg>
          <svg><use href="#hand"/></svg><svg><use href="#lvloff"/></svg><i></i><svg><use href="#prev"/></svg><svg><use href="#cback"/></svg><svg><use href="#next"/></svg><i></i><svg><use href="#sg"/></svg>
        </div>
      </div>
      <div class="cap"><span>工具</span></div>
    </div>
    <div class="group">
      <div class="tools">
        <button class="big drop"><svg><use href="#cam"/></svg><span>镜头类型</span><i class="arr"></i></button>
        <button class="big"><svg><use href="#photo"/></svg><span>放置相机</span></button>
        <div class="mini cam">
          <svg><use href="#persp"/></svg><i></i>
          <svg><use href="#camgear"/></svg><i class="arr"></i>
          <svg><use href="#imgcam"/></svg><i></i>
        </div>
      </div>
      <div class="cap"><span>相机</span></div>
    </div>
    <div class="group">
      <div class="tools"><button class="big"><svg><use href="#pencil"/></svg><span>放置命名边界</span></button></div>
      <div class="cap"><span>命名边界</span><button class="launch" aria-label="命名边界设置"><svg><use href="#launch"/></svg></button></div>
    </div>
    <div class="group roomy">
      <div class="tools">
        <button class="big"><svg><use href="#clip"/></svg><span>剪切体积块</span></button>
        <div class="mini one"><svg><use href="#clipbox"/></svg><svg><use href="#clipswap"/></svg><svg><use href="#clipdel"/></svg></div>
      </div>
      <div class="cap"><span>剪切</span></div>
    </div>
    <div class="group roomy">
      <div class="tools">
        <button class="big"><svg><use href="#hands"/></svg><span>创建保存的视图</span></button>
        <button class="big"><svg><use href="#winsave"/></svg><span>更新保存的视图设置</span></button>
        <button class="big"><svg><use href="#winapply"/></svg><span>应用保存的视图</span></button>
      </div>
      <div class="cap"><span>保存的视图</span><button class="launch" aria-label="保存的视图设置"><svg><use href="#launch"/></svg></button></div>
    </div>
    <div class="group roomy">
      <div class="tools">
        <button class="big"><svg><use href="#copyview"/></svg><span>复制视图</span></button>
        <button class="big"><svg><use href="#cascade"/></svg><span>层叠</span></button>
        <button class="big"><svg><use href="#tile"/></svg><span>平铺</span></button>
        <button class="big"><svg><use href="#arrange"/></svg><span>排列</span></button>
        <button class="big"><svg><use href="#wsize"/></svg><span>视图大小</span></button>
      </div>
      <div class="cap"><span>窗</span></div>
    </div>
    <div class="group roomy">
      <div class="tools">
        <button class="big two active"><svg><use href="#swa"/></svg><span>切换<br>SWA 显示</span></button>
        <button class="big two"><svg><use href="#info"/></svg><span>SWA<br>信息 <i class="arr"></i></span></button>
      </div>
      <div class="cap"><span>实体工作区</span></div>
    </div>
    <div class="group">
      <div class="tools"><button class="big theme"><svg><use href="#theme"/></svg><span>主题图</span></button></div>
      <div class="cap"><span>建筑显示</span></div>
    </div>
  </section>

  <section class="attrs">
    <div class="bar">
      <i class="grip"></i>
      <button class="cell c1" aria-label="匹配"><svg class="i20"><use href="#dropper"/></svg></button>
      <div class="cell"><label class="combo w1"><select aria-label="类别"><option>Steel</option></select></label></div>
      <div class="cell"><label class="combo w2"><select aria-label="样式"><option>Columns_BracedFrame</option></select></label></div>
      <button class="cell c3" aria-label="层"><svg class="i26"><use href="#layers"/></svg></button>
      <label class="cell c4"><input type="checkbox"><span>复合(<u>C</u>)</span></label>
      <button class="cell c5" aria-label="等于"><svg class="i24"><use href="#eq"/></svg></button>
      <div class="cell"><label class="combo w1"><select aria-label="层"><option>样式 层</option></select></label></div>
      <div class="cell"><label class="combo w1"><select aria-label="颜色"><option>样式 颜色</option></select></label></div>
      <div class="cell"><label class="combo w1"><select aria-label="线型"><option>样式 线型</option></select></label></div>
      <div class="cell last"><label class="combo w1"><select aria-label="线宽"><option>样式 线宽</option></select></label></div>
    </div>
    <div class="bar locks">
      <i class="grip"></i>
      <button aria-label="锁 1"><svg><use href="#lk1"/></svg></button><button aria-label="锁 2"><svg><use href="#lk2"/></svg></button><button aria-label="锁 3"><svg><use href="#lk3"/></svg></button><button aria-label="锁 4"><svg><use href="#lk4"/></svg></button>
    </div>
  </section>

  <div class="viewtitle"><svg class="i20"><use href="#viewcube"/></svg><h2>视图 1 - 轴测视图, Design Model</h2></div>

  <div class="viewbar">
    <div class="set">
      <svg><use href="#winprop"/></svg><svg class="dd"><use href="#dd"/></svg>
      <span class="sub"><svg><use href="#dstyle"/></svg></span><svg><use href="#sun"/></svg><svg class="dd"><use href="#dd"/></svg>
      <svg><use href="#bing"/></svg><svg class="dd"><use href="#dd"/></svg>
    </div>
    <div class="set">
      <svg><use href="#brush"/></svg><svg><use href="#zoomin"/></svg><svg><use href="#zoomout"/></svg><svg><use href="#zoomarea"/></svg><svg><use href="#fit"/></svg><span class="sub"><svg><use href="#rotate"/></svg></span><svg><use href="#hand"/></svg>
    </div>
    <div class="set">
      <svg><use href="#feet"/></svg><svg><use href="#plane"/></svg><svg><use href="#nav"/></svg><svg><use href="#prev"/></svg><svg><use href="#next"/></svg>
    </div>
    <div class="set">
      <svg><use href="#copyview"/></svg><span class="sub"><svg><use href="#persp"/></svg></span><span class="sub"><svg><use href="#clip"/></svg></span><svg><use href="#clipbox"/></svg>
    </div>
  </div>

  <main class="canvas">
    <svg class="model" viewBox="0 0 2195 1007" preserveAspectRatio="xMidYMid meet">
      <g class="wire">
        <path d="M1261 46L848 284V760L1261 998L1674 760V284z"/>
        <path d="M1261 46V998M848 284L1674 760M1674 284L848 760"/>
      </g>
      <g fill="#999" fill-opacity=".8">
        <path d="M1213 494l35 3-6 2 15 13-14 8-23-12-4 6z"/>
        <path d="M1310 494l-35 3 6 2-15 13 15 8 21-12 4 6z"/>
        <circle cx="1261" cy="522" r="11" fill-opacity=".5" stroke="#999"/>
        <circle cx="1261" cy="493" r="3"/>
        <path d="M1261 493v29" stroke="#999" stroke-width="2"/>
        <circle cx="1261" cy="523" r="3"/>
      </g>
    </svg>

    <section class="dialog" aria-label="元素选择">
      <header><svg class="i20"><use href="#wrench"/></svg><h3>元素选择</h3>
        <svg class="wctl" viewBox="0 0 130 20"><path d="M1 10h12" stroke="#777"/><rect x="59" y="5" width="11" height="11" rx="1" fill="none" stroke="#ddd"/><path d="M118 4l12 12M130 4l-12 12" stroke="#777" stroke-width="1.200"/></svg>
      </header>
      <div class="drow">
        <div class="pick"><button class="on" aria-label="单个"><svg><use href="#s1"/></svg></button><button aria-label="块"><svg><use href="#s2"/></svg></button><button aria-label="多边形"><svg><use href="#s3"/></svg></button><button aria-label="圆"><svg><use href="#s4"/></svg></button><button aria-label="线"><svg><use href="#s5"/></svg></button></div>
        <button class="side" aria-label="禁用手柄"><svg><use href="#s6"/></svg></button>
      </div>
      <div class="drow">
        <div class="pick"><button class="on" aria-label="新建"><svg><use href="#m1"/></svg></button><button aria-label="添加"><svg><use href="#m2"/></svg></button><button aria-label="减去"><svg><use href="#m3"/></svg></button><button aria-label="反选"><svg><use href="#m4"/></svg></button><button aria-label="全选"><svg><use href="#m5"/></svg></button></div>
        <button class="side" aria-label="选择"><svg><use href="#m6"/></svg></button>
        <button class="expand" aria-label="展开"><svg class="dd"><use href="#dd"/></svg></button>
      </div>
    </section>
  </main>

  <footer class="status">
    <div class="bar b1">
      <i class="grip"></i>
      <button aria-label="梁"><svg><use href="#beam"/></svg></button><button class="on" aria-label="梁选择"><svg><use href="#beam"/></svg></button><button aria-label="注释"><svg><use href="#talk"/></svg></button><button aria-label="剪切"><svg><use href="#cutx"/></svg></button><button aria-label="截面"><svg><use href="#ibeam"/></svg></button>
    </div>
    <div class="bar b2">
      <i class="grip"></i>
      <button class="st" aria-label="楼层"><svg><use href="#stack"/></svg></button><i class="vs"></i>
      <label class="combo floor"><svg class="i20"><use href="#tbl"/></svg><select aria-label="楼层"><option>无</option></select></label>
      <input class="angle" type="text" value="0.00°" aria-label="角度">
      <button class="chev" aria-label="角度列表"><svg viewBox="0 0 10 6"><path d="M1 1l4 4 4-4" fill="none" stroke="#aaa"/></svg></button>
      <button aria-label="坐标系"><svg><use href="#acs"/></svg></button><button aria-label="轴"><svg><use href="#diam"/></svg></button><svg class="dd g"><use href="#dd"/></svg><i class="vs"></i>
      <button aria-label="网格"><svg><use href="#grid"/></svg></button><i class="vs"></i>
      <button aria-label="正交网格"><svg><use href="#grid"/></svg></button><svg class="dd"><use href="#dd"/></svg>
      <button aria-label="弧形网格"><svg><use href="#arcgrid"/></svg></button><svg class="dd"><use href="#dd"/></svg>
    </div>
    <div class="bar b3">
      <i class="grip"></i>
      <button aria-label="后退"><svg><use href="#back"/></svg></button><svg class="dd"><use href="#dd"/></svg>
      <button aria-label="前进"><svg><use href="#fwd"/></svg></button><svg class="dd g"><use href="#dd"/></svg>
      <button aria-label="模型"><svg><use href="#ship"/></svg></button><svg class="dd"><use href="#dd"/></svg>
      <label class="combo dm"><svg class="i24"><use href="#copyview"/></svg><select aria-label="模型"><option>Design Model</option></select></label><i class="vs"></i>
      <button aria-label="视图组"><svg><use href="#copyview"/></svg></button><i class="vs"></i>
      <div class="nums"><button class="on">1</button><button class="on">2</button><button class="on">3</button><button>4</button><button>5</button><button>6</button><button>7</button><button>8</button></div>
    </div>
    <div class="bar b4">
      <i class="grip"></i>
      <label class="xyz"><b>X</b><input type="text" value="8984644.2"></label>
      <label class="xyz"><b>Y</b><input type="text" value="-4201120.8"></label>
      <label class="xyz"><b>Z</b><input type="text" value="0"></label>
    </div>
  </footer>

  <svg class="callout" viewBox="0 0 170 345" aria-hidden="true"><path d="M165 6L15 316" stroke="#fe0000" stroke-width="3" stroke-linecap="round"/><path d="M4 338l6-26 4 4 7 1z" fill="#fe0000"/></svg>
</div>
</body>
</html>
```
FILE: styles.css
```css
* { box-sizing: border-box; }
body, h1, h2, h3 { margin: 0; font-weight: 400; font-size: 15px; }
body, button, input, select {
  font-family: "Open Sans", "Noto Sans CJK SC", sans-serif;
  font-size: 15px;
  color: #1b1b1b;
}
button { border: 0; padding: 0; background: none; }
svg { display: block; flex: none; }
.sprite { position: absolute; width: 0; height: 0; }
.i12 { width: 12px; height: 12px; }
.i18 { width: 18px; height: 18px; }
.i20 { width: 20px; height: 20px; }
.i24 { width: 24px; height: 24px; }
.i26 { width: 26px; height: 24px; }
.dd { width: 10px; height: 6px; }
.dd.g { fill: #707070; }

.app {
  position: relative;
  display: flex;
  flex-direction: column;
  height: 100vh;
  overflow: hidden;
  background: #f0f0f0;
}

/* title bar */
.titlebar { display: flex; align-items: center; height: 34px; padding: 0 0 2px 2px; gap: 8px; }
.tsep { width: 1px; height: 20px; background: #cbc8dc; margin: 0 -2px; }
.workflow { position: relative; width: 200px; }
select { appearance: none; border: 0; background: none; width: 100%; outline: 0; }
.workflow select { height: 28px; border: 1px solid #cdcbdf; background: #f0f0f4; padding: 0 3px; }
.workflow::after, .combo::after {
  content: ""; position: absolute; right: 6px; top: 50%; margin-top: -2px;
  border: 5px solid transparent; border-top: 6px solid #000; border-bottom: 0;
}
.workflow::after { border-width: 4px; border-top: 5px solid #707070; border-bottom: 0; }
.tb { display: flex; align-items: center; gap: 4px; }
.tb .dd, .undo .dd { width: 8px; height: 5px; }
.v8 { margin: 0 4px 0 -1px; }
.undo { gap: 10px; }
.more { margin-left: 4px; }
.titlebar h1 { flex: 1; text-align: center; padding: 2px 0 0 250px; font-size: 14px; }
.search {
  width: 280px; height: 28px; margin-right: -189px; padding: 0 8px 6px;
  border: 1px solid #a2a2a8; border-radius: 0; background: #fff; flex: none;
}
.search::placeholder { font-style: italic; color: #777; opacity: 1; }

/* tabs */
.tabs { display: flex; height: 30px; border-bottom: 1px solid #cbc9de; }
.tabs button { padding: 0 15px 2px; margin: 0 2px; height: 30px; border: 1px solid transparent; border-bottom: 0; }
.tabs .file { margin: 0; padding: 0 13px 2px; height: 29px; background: #0078d0; color: #fff; }
.tabs .on { background: #fafafa; border-color: #cbc9de; }

/* ribbon */
.ribbon { display: flex; height: 119px; background: #fafafa; border-bottom: 1px solid #cbc9de; }
.group {
  display: flex; flex-direction: column; justify-content: space-between;
  margin: 1px 0 2px; padding: 3px 5px 0; border-right: 1px solid #cbc9de;
}
.group.first { padding: 3px 6px 0 7px; }
.group.roomy { padding-left: 6px; }
.tools { display: flex; align-items: flex-start; }
.big {
  display: flex; flex-direction: column; align-items: center;
  min-width: 48px; height: 88px; padding: 5px 4px 0; white-space: nowrap;
}
.big svg { width: 40px; height: 40px; }
.big span { line-height: 16px; margin-top: 6px; }
.big.drop { width: 71px; }
.big.drop span, .big.two span { margin-top: 2px; }
.big.drop > .arr { margin-top: 5px; }
.big.two { height: 87px; margin-top: 1px; padding-top: 3px; border: 1px solid transparent; }
.arr { display: inline-block; width: 8px; height: 5px; background: #707070; clip-path: polygon(0 0, 100% 0, 50% 100%); }
.arr { align-self: center; }
.big span .arr { vertical-align: 3px; }
.big.active { position: relative; background: #c8dcf4; border-color: #c3c7d8; margin-right: 5px; width: 74px; }
.big.active::after {
  content: ""; position: absolute; inset: -12px -10px -8px -14px;
  border: 3px solid #fe0000; box-shadow: 2px 3px 5px #0007, inset 2px 3px 5px #0007;
}
.big.theme { width: 62px; }
.mini { display: grid; grid-auto-rows: 20px; row-gap: 8px; padding: 5px 0 0 4px; }
.mini svg { width: 20px; height: 20px; }
.mini.wide { grid-template-columns: 28px 28px 17px 28px 28px 28px 17px 24px; }
.mini.cam { grid-template-columns: 28px 16px; }
.mini.one { grid-template-columns: 24px; }
.cap { display: flex; align-items: center; height: 21px; }
.cap span { flex: 1; text-align: center; line-height: 20px; white-space: nowrap; }
.launch svg { width: 10px; height: 10px; margin: 0 4px; }

/* attribute toolbar */
.attrs { display: flex; height: 43px; background: #d6d6d6; border-bottom: 1px solid #2b3336; }
.bar { display: flex; background: #f0f0f0; border-right: 4px solid #dcdcdc; }
.grip { width: 2px; height: 26px; margin: 8px 0 0 2px; background: repeating-linear-gradient(#999 0 2px, transparent 2px 4px); flex: none; }
.cell { display: flex; align-items: center; justify-content: center; height: 34px; margin-top: 4px; padding: 0 3px 0 4px; border-right: 1px solid #9a9a9a; }
.cell.last { border-right: 0; }
.c1 { width: 35px; }
.c3 { width: 41px; }
.c4 { width: 97px; gap: 7px; justify-content: flex-start; }
.c5 { width: 43px; }
.c4 input { appearance: none; width: 24px; height: 24px; margin: 0; border: 1px solid #666; border-radius: 4px; background: #f4f4f4; }
.combo { position: relative; display: flex; align-items: center; height: 25px; background: #fdfdfd; border: 1px solid #cfcfcf; border-radius: 5px; }
.combo select { height: 22px; padding: 0 1px; }
.w1 { width: 111px; }
.w2 { width: 225px; }
.locks { padding-right: 1px; }
.locks button { width: 36px; height: 34px; margin-top: 4px; }
.locks svg { width: 30px; height: 28px; margin: 0 auto; }
.locks { border-right-width: 1px; }

/* view window */
.viewtitle { display: flex; align-items: center; gap: 8px; height: 37px; padding: 5px 2px 0; background: linear-gradient(#93b0cf, #b9d1ec); }
.viewbar { display: flex; align-items: center; height: 30px; }
.set { display: flex; align-items: center; gap: 4px; height: 28px; padding: 0 3px 0 5px; border-right: 1px solid #9a9a9a; }
.set:first-child { padding-left: 4px; }
.set:last-child { border: 0; }
.set svg { width: 24px; height: 24px; }
.set .dd { width: 10px; height: 6px; margin: 0 4px 0 1px; }
.sub { position: relative; }
.sub::after { content: ""; position: absolute; right: 0; bottom: -1px; border: 4px solid transparent; border-top: 4px solid #000; border-bottom: 0; }

.canvas { position: relative; flex: 1; min-height: 0; background: #e1e1e1; }
.model { width: 100%; height: 100%; }
.wire { fill: none; stroke: #00ff00; stroke-width: 1; stroke-dasharray: 5 3; }

/* floating tool settings */
.dialog {
  position: absolute; right: 55px; top: 107px; width: 285px; height: 156px;
  border: 1px solid #a4a4a4; border-radius: 9px; background: #f0f0f0;
  box-shadow: 0 20px 40px #0005, 0 0 5px #0003;
}
.dialog header { display: flex; align-items: center; gap: 7px; height: 37px; padding: 0 24px 2px 9px; background: #f4f4f4; border-radius: 9px 9px 0 0; }
.dialog h3 { color: #8c8c8c; flex: 1; }
.wctl { width: 130px; height: 20px; }
.drow { display: flex; align-items: flex-start; margin: 16px 0 19px 15px; }
.pick { display: flex; gap: 1px; padding: 2px; height: 34px; border: 1px solid #a0a0a0; border-right-color: #fff; border-bottom-color: #fff; }
.pick button { width: 28px; height: 28px; display: grid; place-items: center; }
.pick svg { width: 24px; height: 24px; }
.pick .on { background: #7fb5e2; border: 1px solid #2f6fc8; }
.side { margin: 2px 0 0 28px; }
.side svg { width: 28px; height: 28px; }
.expand { margin: 23px 0 0 35px; }

/* status bar */
.status { display: flex; align-items: flex-start; height: 22px; overflow: hidden; flex: none; }
.status .bar { height: 44px; align-items: flex-start; flex: none; }
.status .grip { margin-top: 7px; }
.status .bar > button { width: 36px; height: 38px; margin-top: 3px; padding: 1px; }
.status .bar > button svg { width: 32px; height: 32px; }
.status .on { background: #7fb5e2; border: 1px solid #2f6fc8; }
.status .dd { margin: 18px 6px 0; }
.vs { width: 1px; height: 36px; margin: 3px 1px 0; background: #9a9a9a; }
.b1 { width: 194px; padding-left: 1px; }
.b1 .grip { margin-right: 3px; }
.b2 { width: 1026px; }
.status .b2 .grip { margin-left: 1px; margin-right: 5px; }
.b2 .combo { flex: 1; }
.status .combo { height: 26px; margin: 9px 2px 0; padding-left: 3px; }
.status .combo select { height: 24px; padding-left: 9px; }
.angle { width: 95px; height: 26px; margin-top: 9px; border: 2px solid #a9bddb; background: #f0f0f0; color: #777; padding: 0 6px; }
.status .bar > .chev { width: 20px; height: 26px; margin: 9px 2px 0 3px; border: 1px solid #ddd; border-radius: 4px; background: #f7f7f7; }
.status .bar > .chev svg { width: 10px; height: 6px; margin: 0 auto; }
.b3 { width: 595px; }
.status .b3 .grip { margin-left: 0; margin-right: 3px; }
.status .b3 .dd { margin: 18px 4px 0; }
.status .dm { width: 200px; padding-left: 0; }
.status .dm select { padding-left: 6px; }
.nums { display: flex; gap: 1px; margin: 9px 0 0 2px; }
.nums button { width: 20px; height: 26px; border: 1px solid #fff; border-right: 2px solid #222; background: #f0f0f0; }
.nums .on { border-right: 2px solid #222; }
.b4 { flex: 1 0 auto; border: 0; }
.xyz { display: flex; align-items: flex-start; gap: 6px; padding: 9px 4px 0 6px; height: 40px; border-right: 1px solid #9a9a9a; }
.xyz b { width: 14px; font-size: 18px; line-height: 22px; text-align: center; }
.xyz input { width: 140px; height: 26px; border: 1px solid #a0a4ac; background: #fff; color: #777; padding: 0 8px; }
.xyz:first-of-type { padding-left: 5px; }

/* callout arrow */
.callout { position: absolute; left: 1654px; top: 175px; width: 170px; height: 345px; pointer-events: none; }
```
